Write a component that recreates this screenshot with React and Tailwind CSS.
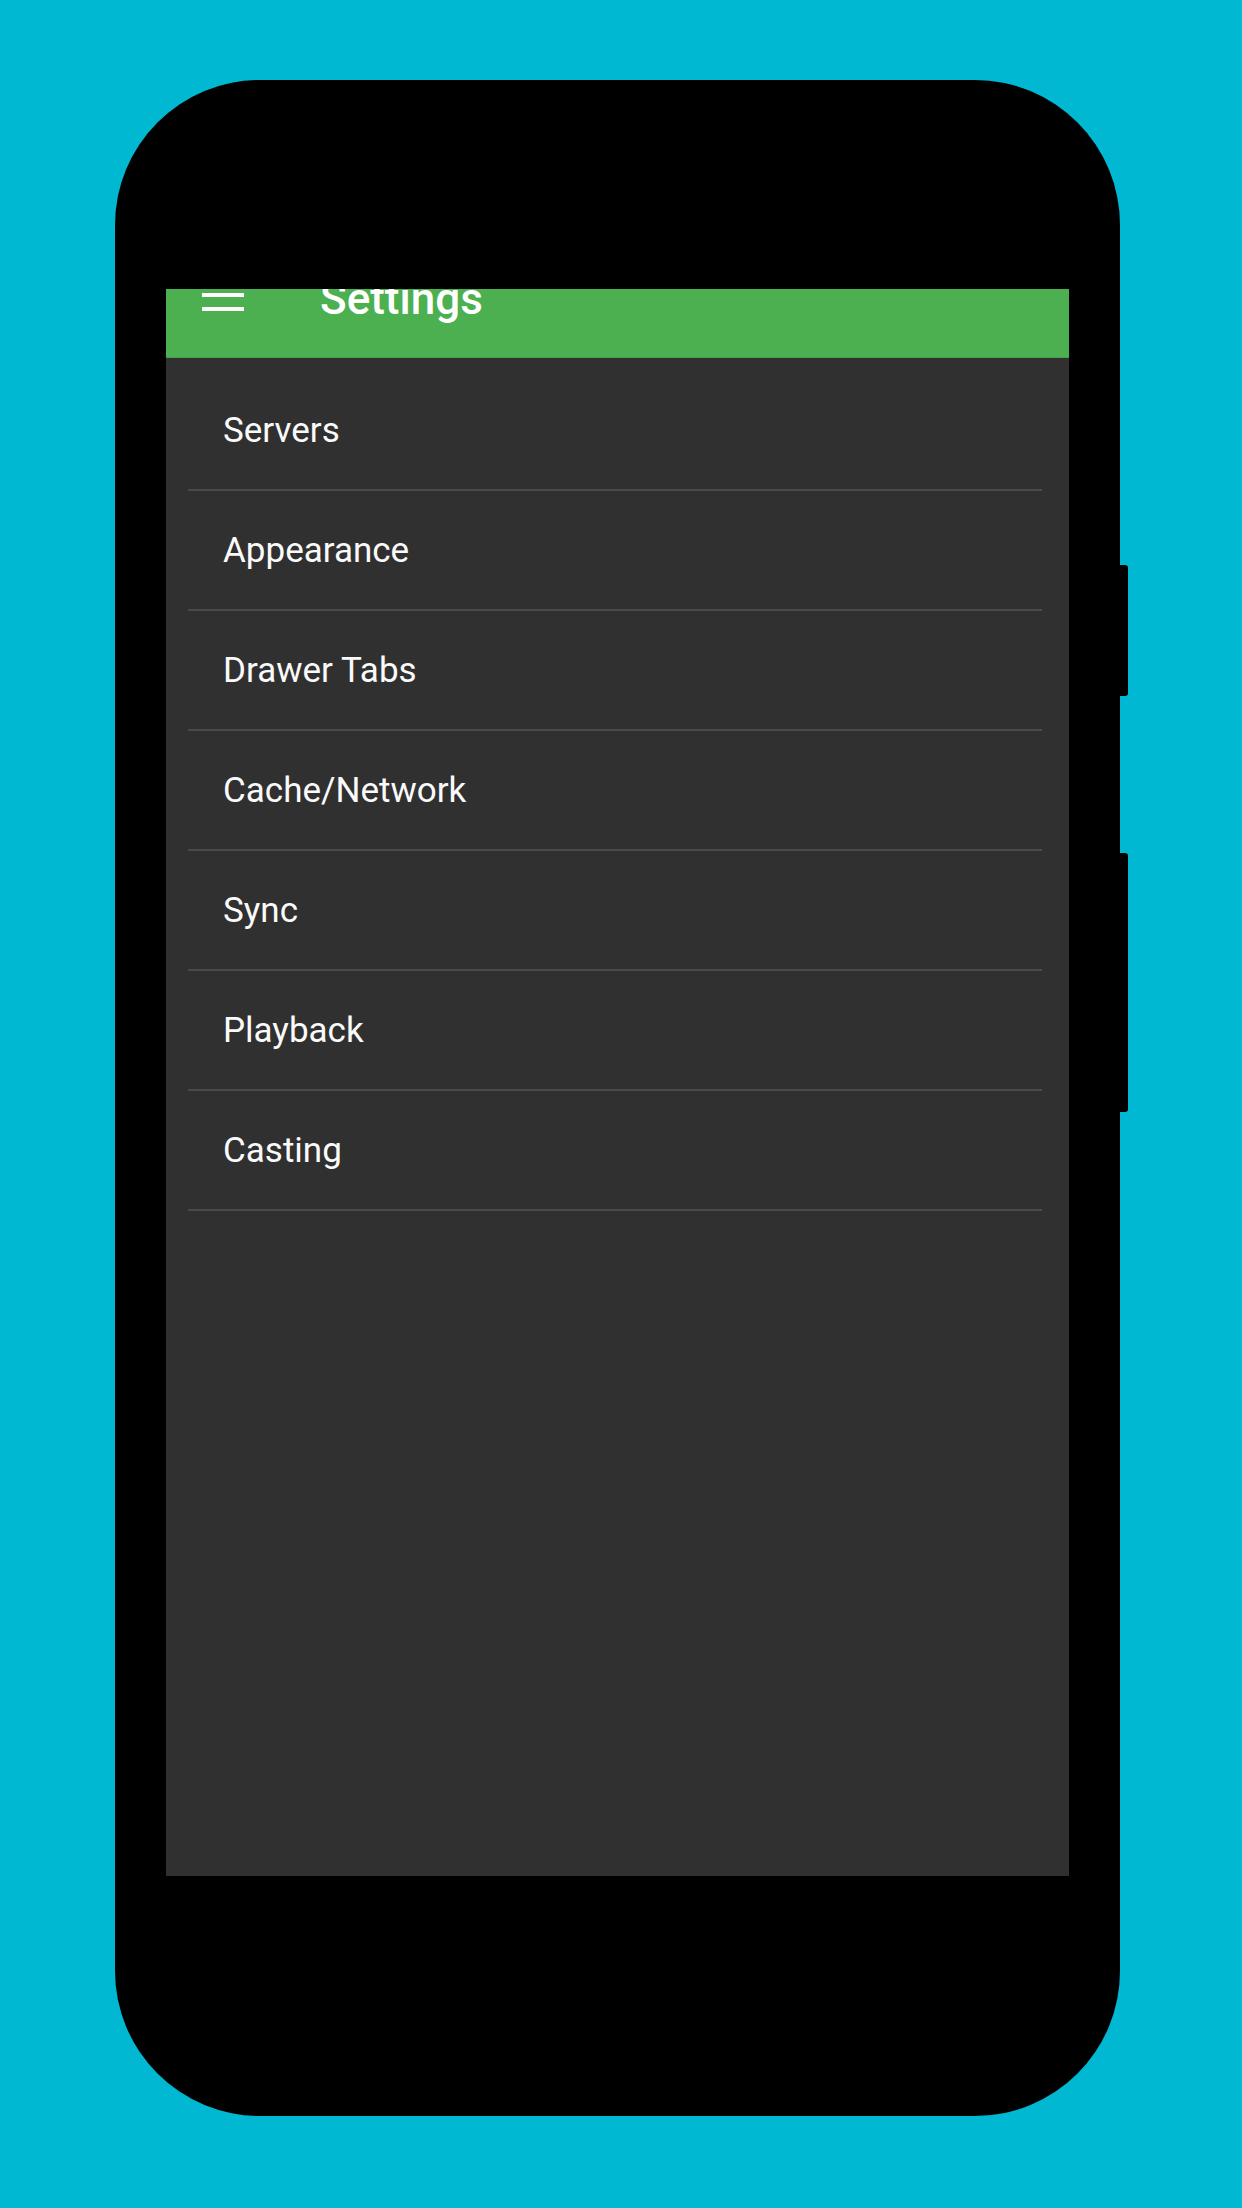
import React from 'react';

const items = ['Servers', 'Appearance', 'Drawer Tabs', 'Cache/Network', 'Sync', 'Playback', 'Casting'];

const MenuIcon = () => (
  <svg width="42" height="32" viewBox="0 0 42 32" className="shrink-0 mt-[-10px]">
    <rect x="0" y="0" width="42" height="4" fill="#ffffff" />
    <rect x="0" y="14" width="42" height="4" fill="#ffffff" />
    <rect x="0" y="28" width="42" height="4" fill="#ffffff" />
  </svg>
);

const App = () => {
  return (
    <div
      className="w-[1242px] h-[2208px] bg-[#00b8d1] pt-[80px] pl-[115px] overflow-hidden"
      style={{ fontFamily: 'Roboto, "Noto Sans", sans-serif' }}
    >
      <div className="relative w-[1005px] h-[2036px] bg-black rounded-[145px] pt-[209px] pl-[51px]">
        {/* side buttons */}
        <div className="absolute left-full top-[485px] w-[8px] h-[131px] bg-black rounded-r-[3px]" />
        <div className="absolute left-full top-[773px] w-[8px] h-[259px] bg-black rounded-r-[3px]" />

        <div className="w-[903px] h-[1587px] bg-[#303030] flex flex-col">
          <div className="h-[69px] bg-[#4caf50] overflow-hidden shrink-0 border-b border-[#44a047]">
            <div className="flex items-start pl-[36px]">
              <MenuIcon />
              <span className="ml-[76px] mt-[-12px] text-[44px] leading-none font-medium text-white">
                Settings
              </span>
            </div>
          </div>

          <div className="pl-[22px] pr-[27px] pt-[13px]">
            {items.map((item) => (
              <div
                key={item}
                className="h-[120px] flex items-center pl-[35px] pt-[3px] border-b-2 border-[#4a4a4a]"
              >
                <span className="text-[35px] text-[#fafafa]">{item}</span>
              </div>
            ))}
          </div>
        </div>
      </div>
    </div>
  );
};

export default App;
